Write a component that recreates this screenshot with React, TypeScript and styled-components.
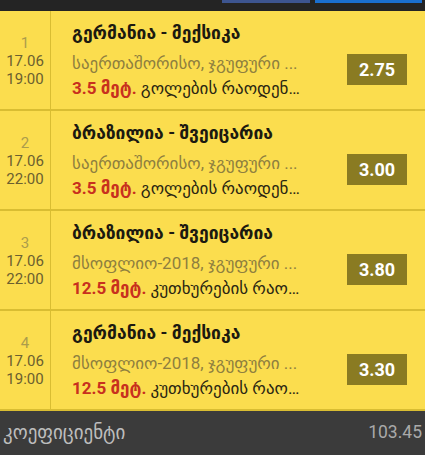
import React from "react";
import styled, { createGlobalStyle } from "styled-components";

const Global = createGlobalStyle`
  html, body { margin: 0; padding: 0; background: #fbdd4e; }
  body { font-family: Roboto, "DejaVu Sans", sans-serif; overflow: hidden; }
  * { box-sizing: border-box; }
`;

const Page = styled.div`
  width: 425px;
  height: 455px;
  display: flex;
  flex-direction: column;
  background: #fbdd4e;
`;

const TopBar = styled.div`
  height: 11px;
  background: #242424;
  display: flex;
  justify-content: flex-end;
  align-items: flex-start;
  gap: 5px;
  padding-right: 3px;
`;

const TopButton = styled.div<{ $color: string; $w: number }>`
  width: ${(p) => p.$w}px;
  height: 3px;
  background: ${(p) => p.$color};
`;

const Row = styled.div`
  height: 100px;
  display: grid;
  grid-template-columns: 51px 1fr auto;
  border-bottom: 2px solid #d9bd32;
`;

const Left = styled.div`
  border-right: 1px solid #d9bd32;
  display: flex;
  flex-direction: column;
  justify-content: center;
  align-items: center;
  font-size: 15px;
  line-height: 18px;
  color: #6b6030;
  padding-top: 2px;
`;

const Num = styled.div`
  color: #ab9c4c;
`;

const Middle = styled.div`
  padding: 9px 0 0 21px;
  min-width: 0;
  display: flex;
  flex-direction: column;
`;

const Title = styled.div`
  font-size: 17.5px;
  font-weight: bold;
  line-height: 26px;
  margin-bottom: 5px;
  color: #1c1a10;
  white-space: nowrap;
`;

const Line = styled.div`
  width: 233px;
  font-size: 17px;
  line-height: 25px;
  white-space: nowrap;
  overflow: hidden;
  text-overflow: ellipsis;
`;

const Sub = styled(Line)`
  color: #8e7f3f;
`;

const Market = styled(Line)`
  color: #2a2612;
`;

const Handicap = styled.span`
  color: #c8301e;
  font-weight: bold;
  font-size: 17px;
`;

const Right = styled.div`
  padding: 43px 18px 0 0;
`;

const Odds = styled.div`
  width: 60px;
  height: 31px;
  background: #8a7b22;
  color: #ffffff;
  font-weight: bold;
  font-size: 18px;
  display: flex;
  align-items: center;
  justify-content: center;
`;

const Footer = styled.div`
  flex: 1;
  background: #3b3b3b;
  display: flex;
  align-items: center;
  justify-content: space-between;
  padding: 0 3px 2px 3px;
  color: #bdbdbd;
`;

const Label = styled.span`
  font-size: 19px;
`;

const Total = styled.span`
  font-size: 17.5px;
  color: #a9a9a9;
`;

const rows = [
  { n: 1, d: "17.06", t: "19:00", title: "გერმანია - მექსიკა", sub: "საერთაშორისო, ჯგუფური ...", h: "3.5 მეტ.", m: "გოლების რაოდენობა", o: "2.75" },
  { n: 2, d: "17.06", t: "22:00", title: "ბრაზილია - შვეიცარია", sub: "საერთაშორისო, ჯგუფური ...", h: "3.5 მეტ.", m: "გოლების რაოდენობა", o: "3.00" },
  { n: 3, d: "17.06", t: "22:00", title: "ბრაზილია - შვეიცარია", sub: "მსოფლიო-2018, ჯგუფური ...", h: "12.5 მეტ.", m: "კუთხურების რაოდენობა", o: "3.80" },
  { n: 4, d: "17.06", t: "19:00", title: "გერმანია - მექსიკა", sub: "მსოფლიო-2018, ჯგუფური ...", h: "12.5 მეტ.", m: "კუთხურების რაოდენობა", o: "3.30" },
];

export default function App() {
  return (
    <Page>
      <Global />
      <TopBar>
        <TopButton $color="#3d5590" $w={88} />
        <TopButton $color="#1a6fcf" $w={107} />
      </TopBar>
      {rows.map((r) => (
        <Row key={r.n}>
          <Left>
            <Num>{r.n}</Num>
            <div>{r.d}</div>
            <div>{r.t}</div>
          </Left>
          <Middle>
            <Title>{r.title}</Title>
            <Sub>{r.sub}</Sub>
            <Market>
              <Handicap>{r.h}</Handicap> {r.m}
            </Market>
          </Middle>
          <Right>
            <Odds>{r.o}</Odds>
          </Right>
        </Row>
      ))}
      <Footer>
        <Label>კოეფიციენტი</Label>
        <Total>103.45</Total>
      </Footer>
    </Page>
  );
}
